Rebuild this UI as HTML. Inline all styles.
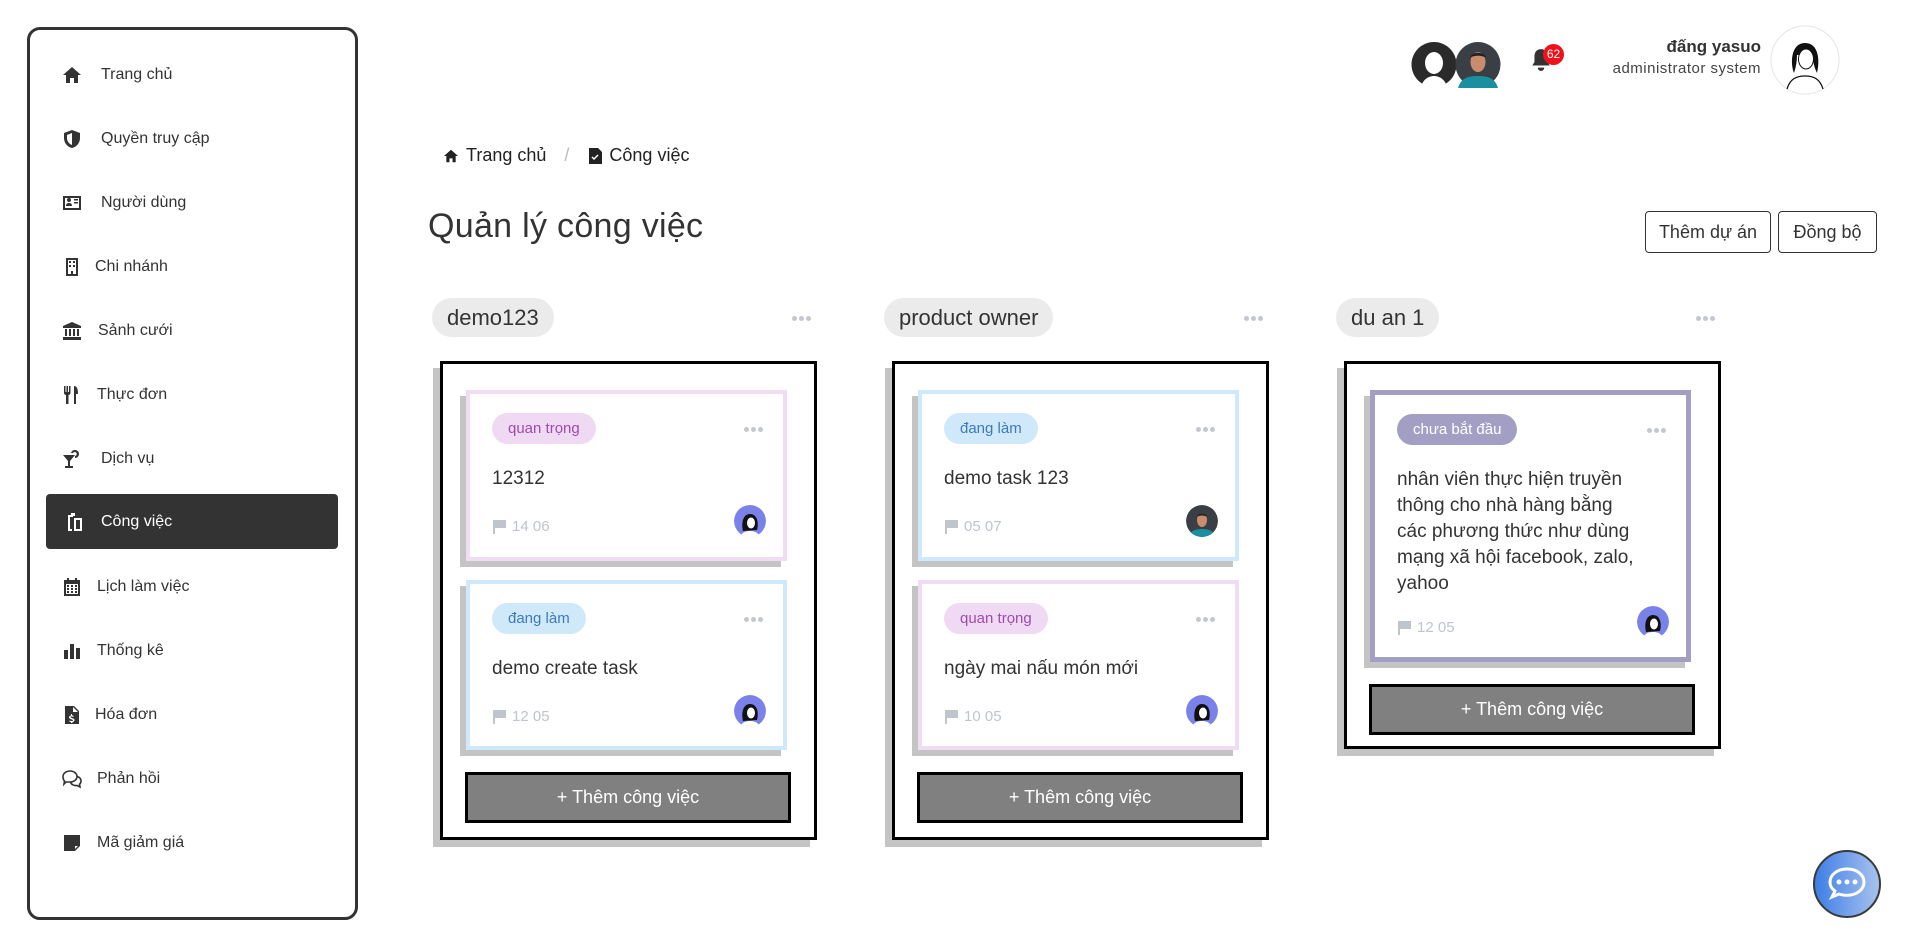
<!DOCTYPE html>
<html><head><meta charset="utf-8">
<style>
*{box-sizing:border-box;margin:0;padding:0}
body{width:1917px;height:941px;background:#fff;font-family:"Liberation Sans","Noto Sans CJK SC",sans-serif;color:#333;position:relative;overflow:hidden}
.abs{position:absolute}
.side{left:27px;top:27px;width:331px;height:893px;border:3px solid #333;border-radius:13px}
.item{position:absolute;left:17px;width:292px;height:40px;display:flex;align-items:center;font-size:16px;color:#333}
.item svg{position:absolute;left:15px;width:20px;height:20px;fill:#333}
.item span{position:absolute;left:54px}
.item.act{background:#333;color:#fff;border-radius:4px;height:55px;left:16px;width:292px}
.item.act svg{fill:#fff}
.colhd{height:39px;border-radius:20px;background:#ebebeb;font-size:22px;padding:0 15px;line-height:39px;color:#333}
.dots{font-size:0}
.dots i{display:inline-block;width:5px;height:5px;border-radius:50%;background:#c4c7cf;margin-right:2px}
.box{border:3px solid #000;box-shadow:-7px 7px 0 #c4c4c4;background:#fff}
.card{background:#fff;box-shadow:-6px 6px 0 #c4c4c4;border:4px solid}
.tag{position:absolute;left:22px;top:19px;height:31px;border-radius:16px;padding:0 16px;line-height:31px;font-size:15px}
.cdots{position:absolute;right:18px;top:33px}
.ttl{position:absolute;left:22px;font-size:19px;color:#333;line-height:26px;white-space:nowrap}
.foot{position:absolute;left:22px;font-size:15px;color:#c0c4cc;display:flex;align-items:center;gap:5px}
.av{position:absolute;right:17px;width:32px;height:32px;border-radius:50%;overflow:hidden}
.btn{position:absolute;height:51px;background:#808080;border:3px solid #000;color:#fff;font-size:18px;text-align:center;line-height:45px}
</style></head><body>

<div class="abs side">
 <div class="item" style="top:25px"><svg viewBox="0 0 20 20"><path d="M10 2 1 10h3v8h4v-5h4v5h4v-8h3z"/></svg><span>Trang chủ</span></div>
 <div class="item" style="top:89px"><svg viewBox="0 0 20 20"><path d="M10 1 2 4v5c0 5 3.5 9 8 10 4.5-1 8-5 8-10V4zm0 3v12c-3-1-5-4-5-7V6z"/></svg><span>Quyền truy cập</span></div>
 <div class="item" style="top:153px"><svg viewBox="0 0 20 20"><path d="M1 3h18v14H1zm2 2v10h14V5zm1 8c0-2 1-3 3-3s3 1 3 3zm3-4a2 2 0 1 1 0-4 2 2 0 0 1 0 4zm5-3h4v1.5h-4zm0 3h4v1.5h-4z"/></svg><span>Người dùng</span></div>
 <div class="item" style="top:217px"><svg viewBox="0 0 20 20"><path d="M4 1h12v18H4zm2 2v14h3v-3h2v3h3V3zm1 1h2v2H7zm4 0h2v2h-2zM7 8h2v2H7zm4 0h2v2h-2z"/></svg><span style="left:48px">Chi nhánh</span></div>
 <div class="item" style="top:281px"><svg viewBox="0 0 20 20"><path d="M10 1 1 5v2h18V5zM3 8h2v7H3zm4 0h2v7H7zm4 0h2v7h-2zm4 0h2v7h-2zM1 16h18v3H1z"/></svg><span style="left:51px">Sảnh cưới</span></div>
 <div class="item" style="top:345px"><svg viewBox="0 0 20 20"><path d="M2 1h1.5v6h1V1H6v6h1V1h1.5v7c0 1-1 2-2 2v9H4v-9c-1 0-2-1-2-2zM12 1c3 0 4 3 4 8h-2v10h-2z"/></svg><span style="left:50px">Thực đơn</span></div>
 <div class="item" style="top:409px"><svg viewBox="0 0 20 20"><path d="M1 6h12l-5 6v5h3v2H3v-2h3v-5zM13 1a4 4 0 1 1 0 8v-2a2 2 0 1 0-2-3H9a4 4 0 0 1 4-3z"/></svg><span>Dịch vụ</span></div>
 <div class="item act" style="top:464px"><svg viewBox="0 0 20 20" style="left:19px"><path d="M3 3h5v2H5v12h2v2H3zm6 3h8v13H9zm2 2v9h4V8zM6 1h4v3H6z"/></svg><span style="left:55px">Công việc</span></div>
 <div class="item" style="top:537px"><svg viewBox="0 0 20 20"><path d="M5 1h2v2h6V1h2v2h3v16H2V3h3zm-1 6v10h12V7zm1 1h2v2H5zm4 0h2v2H9zm4 0h2v2h-2zm-8 3h2v2H5zm4 0h2v2H9zm4 0h2v2h-2zm-8 3h2v2H5zm4 0h2v2H9zm4 0h2v2h-2z"/></svg><span style="left:50px">Lịch làm việc</span></div>
 <div class="item" style="top:601px"><svg viewBox="0 0 20 20"><path d="M2 9h4v9H2zm6-6h4v15H8zm6 4h4v11h-4z"/></svg><span style="left:50px">Thống kê</span></div>
 <div class="item" style="top:665px"><svg viewBox="0 0 20 20"><path d="M3 1h9l5 5v13H3zm8 1v5h5zM9 9v1.5c-1.5.3-2 1-2 2 0 2 4 1.5 4 3 0 .6-2 .6-3.5 0v1.3c.5.2 1 .3 1.5.3V18h1.5v-1c1.5-.3 2-1 2-2 0-2-4-1.6-4-3 0-.6 1.6-.6 3 0V10.7c-.5-.2-1-.3-1.5-.3V9z"/></svg><span style="left:48px">Hóa đơn</span></div>
 <div class="item" style="top:729px"><svg viewBox="0 0 20 20" style="fill:none;stroke:#333;stroke-width:1.6"><path d="M8 2c4 0 7 2.5 7 5.5S12 13 8 13H4l-2 2 .5-3C1.5 11 1 9.5 1 7.5 1 4.5 4 2 8 2z"/><path d="M15.5 7.5c2 .8 3.5 2.5 3.5 4.5 0 1.5-.5 2.5-1.5 3.3L18 18l-3-1.5c-3 .4-6-1-6.5-3.5"/></svg><span style="left:50px">Phản hồi</span></div>
 <div class="item" style="top:793px"><svg viewBox="0 0 20 20"><path d="M2 2h16v11l-5 5H2z"/><path d="M13 13h3l-3 3z" fill="#fff"/></svg><span style="left:50px">Mã giảm giá</span></div>
</div>

<!-- header -->
<svg class="abs" style="left:1411px;top:41px" width="92" height="47" viewBox="0 0 92 47">
 <circle cx="23" cy="23.5" r="22.5" fill="#2a2a2a"/><ellipse cx="23" cy="22" rx="9" ry="11" fill="#fff"/><path d="M10 46c2-8 8-11 13-11s11 3 13 11z" fill="#fff"/>
 <circle cx="67" cy="23.5" r="22.5" fill="#3a3f45"/><path d="M47 47c3-10 10-12 20-12s17 2 20 12z" fill="#1a8fa0"/><ellipse cx="67" cy="21" rx="7.5" ry="10" fill="#c98d6e"/><path d="M59 17c1-7 15-7 16 0-3-3-13-3-16 0z" fill="#222"/>
</svg>
<svg class="abs" style="left:1530px;top:48px" width="22" height="24" viewBox="0 0 20 22"><path d="M10 1c-4 0-6 3-6 7v5l-2 3h16l-2-3V8c0-4-2-7-6-7zM7 18a3 3 0 0 0 6 0z" fill="#333"/></svg>
<div class="abs" style="left:1543px;top:44px;width:21px;height:21px;border-radius:50%;background:#f2111b;color:#fff;font-size:12px;line-height:21px;text-align:center">62</div>
<div class="abs" style="right:156px;top:37px;font-size:17px;font-weight:bold;color:#333;text-align:right">đấng yasuo</div>
<div class="abs" style="right:156px;top:60px;font-size:15px;color:#444;text-align:right;letter-spacing:.5px">administrator system</div>
<svg class="abs" style="left:1770px;top:25px" width="70" height="70" viewBox="0 0 70 70">
 <circle cx="35" cy="35" r="34" fill="#fff" stroke="#e4e4e8"/><path d="M24 48c-4-10-3-30 11-30s15 18 12 30c-3-6-4-12-4-18h-16c0 6-1 12-3 18z" fill="#111"/><ellipse cx="36" cy="34" rx="7.5" ry="10" fill="#fff" stroke="#111"/><path d="M17 64c3-10 9-13 18-13s15 3 18 13" fill="none" stroke="#111" stroke-width="1.3"/>
</svg>

<!-- breadcrumb -->
<div class="abs" style="left:443px;top:145px;font-size:18px;color:#222;display:flex;align-items:center">
 <svg width="16" height="14" viewBox="0 0 20 18" style="margin-right:7px"><path d="M10 1 1 9h3v8h4v-5h4v5h4V9h3z" fill="#222"/></svg>Trang chủ
 <span style="color:#bbb;margin:0 20px 0 18px">/</span>
 <svg width="13" height="16" viewBox="0 0 13 16" style="margin-right:7px"><path d="M0 0h9l4 4v12H0z" fill="#222"/><path d="M3 9l2 2 4-4" stroke="#fff" stroke-width="1.5" fill="none"/></svg>Công việc
</div>
<div class="abs" style="left:428px;top:207px;font-size:34px;color:#333;letter-spacing:.3px">Quản lý công việc</div>
<div class="abs" style="left:1645px;top:211px;width:126px;height:42px;border:1px solid #333;border-radius:4px;font-size:18px;text-align:center;line-height:40px">Thêm dự án</div>
<div class="abs" style="left:1778px;top:211px;width:99px;height:42px;border:1px solid #333;border-radius:4px;font-size:18px;text-align:center;line-height:40px">Đồng bộ</div>

<!-- column 1 -->
<div class="abs colhd" style="left:432px;top:298px">demo123</div>
<div class="abs dots" style="left:792px;top:316px"><i></i><i></i><i></i></div>
<div class="abs box" style="left:440px;top:361px;width:377px;height:479px"></div>
<div class="abs card" style="left:466px;top:390px;width:321px;height:171px;border-color:#f0dcf3">
 <div class="tag" style="background:#f0d9f3;color:#9c4cae">quan trọng</div>
 <div class="cdots dots"><i></i><i></i><i></i></div>
 <div class="ttl" style="top:72px">12312</div>
 <div class="foot" style="top:124px"><svg width="15" height="15" viewBox="0 0 15 15"><path d="M1 1h2v14H1zm2 0h11v8H3z" fill="#c0c4cc"/></svg>14 06</div>
 <svg class="av" style="top:111px" viewBox="0 0 32 32"><circle cx="16" cy="16" r="16" fill="#7a82ea"/><path d="M9 26c-2-8 0-17 7-17s9 8 7 16z" fill="#111"/><ellipse cx="17" cy="18" rx="4" ry="5.5" fill="#fff"/><path d="M6 32c2-5 6-6 10-6s8 1 10 6z" fill="#fff"/></svg>
</div>
<div class="abs card" style="left:466px;top:580px;width:321px;height:170px;border-color:#d0e9fa">
 <div class="tag" style="background:#d0e9fa;color:#3d7ab8">đang làm</div>
 <div class="cdots dots"><i></i><i></i><i></i></div>
 <div class="ttl" style="top:72px">demo create task</div>
 <div class="foot" style="top:124px"><svg width="15" height="15" viewBox="0 0 15 15"><path d="M1 1h2v14H1zm2 0h11v8H3z" fill="#c0c4cc"/></svg>12 05</div>
 <svg class="av" style="top:111px" viewBox="0 0 32 32"><circle cx="16" cy="16" r="16" fill="#7a82ea"/><path d="M9 26c-2-8 0-17 7-17s9 8 7 16z" fill="#111"/><ellipse cx="17" cy="18" rx="4" ry="5.5" fill="#fff"/><path d="M6 32c2-5 6-6 10-6s8 1 10 6z" fill="#fff"/></svg>
</div>
<div class="btn" style="left:465px;top:772px;width:326px">+ Thêm công việc</div>

<!-- column 2 -->
<div class="abs colhd" style="left:884px;top:298px">product owner</div>
<div class="abs dots" style="left:1244px;top:316px"><i></i><i></i><i></i></div>
<div class="abs box" style="left:892px;top:361px;width:377px;height:479px"></div>
<div class="abs card" style="left:918px;top:390px;width:321px;height:171px;border-color:#d0e9fa">
 <div class="tag" style="background:#d0e9fa;color:#3d7ab8">đang làm</div>
 <div class="cdots dots"><i></i><i></i><i></i></div>
 <div class="ttl" style="top:72px">demo task 123</div>
 <div class="foot" style="top:124px"><svg width="15" height="15" viewBox="0 0 15 15"><path d="M1 1h2v14H1zm2 0h11v8H3z" fill="#c0c4cc"/></svg>05 07</div>
 <svg class="av" style="top:111px" viewBox="0 0 32 32"><circle cx="16" cy="16" r="16" fill="#3a3f45"/><path d="M2 32c2-6 7-8 14-8s12 2 14 8z" fill="#1a8fa0"/><ellipse cx="16" cy="15" rx="5" ry="7" fill="#c98d6e"/><path d="M11 12c1-5 9-5 10 0-2-2-8-2-10 0z" fill="#222"/></svg>
</div>
<div class="abs card" style="left:918px;top:580px;width:321px;height:170px;border-color:#f0dcf3">
 <div class="tag" style="background:#f0d9f3;color:#9c4cae">quan trọng</div>
 <div class="cdots dots"><i></i><i></i><i></i></div>
 <div class="ttl" style="top:72px">ngày mai nấu món mới</div>
 <div class="foot" style="top:124px"><svg width="15" height="15" viewBox="0 0 15 15"><path d="M1 1h2v14H1zm2 0h11v8H3z" fill="#c0c4cc"/></svg>10 05</div>
 <svg class="av" style="top:111px" viewBox="0 0 32 32"><circle cx="16" cy="16" r="16" fill="#7a82ea"/><path d="M9 26c-2-8 0-17 7-17s9 8 7 16z" fill="#111"/><ellipse cx="17" cy="18" rx="4" ry="5.5" fill="#fff"/><path d="M6 32c2-5 6-6 10-6s8 1 10 6z" fill="#fff"/></svg>
</div>
<div class="btn" style="left:917px;top:772px;width:326px">+ Thêm công việc</div>

<!-- column 3 -->
<div class="abs colhd" style="left:1336px;top:298px">du an 1</div>
<div class="abs dots" style="left:1696px;top:316px"><i></i><i></i><i></i></div>
<div class="abs box" style="left:1344px;top:361px;width:377px;height:388px"></div>
<div class="abs card" style="left:1370px;top:390px;width:321px;height:272px;border-color:#a39fc4;border-width:5px">
 <div class="tag" style="background:#a39fc4;color:#fff">chưa bắt đầu</div>
 <div class="cdots dots"><i></i><i></i><i></i></div>
 <div class="ttl" style="top:72px">nhân viên thực hiện truyền<br>thông cho nhà hàng bằng<br>các phương thức như dùng<br>mạng xã hội facebook, zalo,<br>yahoo</div>
 <div class="foot" style="top:224px"><svg width="15" height="15" viewBox="0 0 15 15"><path d="M1 1h2v14H1zm2 0h11v8H3z" fill="#c0c4cc"/></svg>12 05</div>
 <svg class="av" style="top:211px" viewBox="0 0 32 32"><circle cx="16" cy="16" r="16" fill="#7a82ea"/><path d="M9 26c-2-8 0-17 7-17s9 8 7 16z" fill="#111"/><ellipse cx="17" cy="18" rx="4" ry="5.5" fill="#fff"/><path d="M6 32c2-5 6-6 10-6s8 1 10 6z" fill="#fff"/></svg>
</div>
<div class="btn" style="left:1369px;top:684px;width:326px">+ Thêm công việc</div>

<!-- chat -->
<svg class="abs" style="left:1812px;top:849px" width="70" height="70" viewBox="0 0 70 70">
 <defs><linearGradient id="g" x1="0" x2="1"><stop offset="0" stop-color="#3d7de6"/><stop offset="1" stop-color="#a9c3ee"/></linearGradient></defs>
 <circle cx="35" cy="35" r="33" fill="url(#g)" stroke="#3a3a3a" stroke-width="2"/>
 <path d="M35 20c-10 0-17 6-17 13 0 4 2 7 5 9l-3 6 7-3c2.5 1 5 1.3 8 1.3 10 0 17-6 17-13.3S45 20 35 20z" fill="none" stroke="#fff" stroke-width="3"/>
 <circle cx="27" cy="33" r="2.5" fill="#fff"/><circle cx="35" cy="33" r="2.5" fill="#fff"/><circle cx="43" cy="33" r="2.5" fill="#fff"/>
</svg>
</body></html>
